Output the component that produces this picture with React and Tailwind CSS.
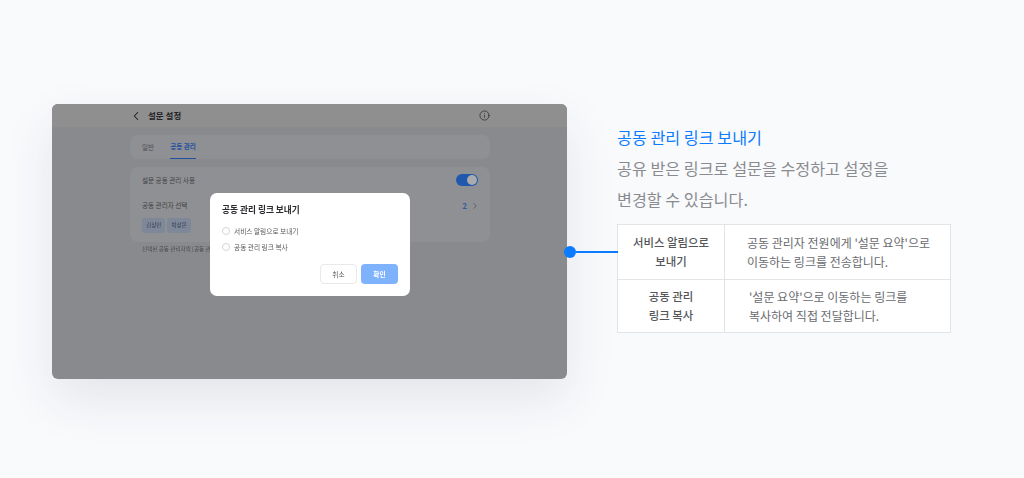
import { ChevronLeft, ChevronRight, Info } from "lucide-react";

const font = "font-['Noto_Sans_CJK_KR','Noto_Sans',sans-serif]";

function SurveyWindow() {
  return (
    <div className="relative w-[515px] h-[275px] shrink-0 rounded-[6px] overflow-hidden bg-[#898a8d] shadow-[0_20px_50px_rgba(40,50,80,0.1)]">
      <div className="blur-[0.3px]">
        {/* Header */}
        <div className="h-[23px] bg-[#8f8f90] flex items-center pl-[77px] pr-[77px]">
          <ChevronLeft size={14} strokeWidth={1.8} className="text-[#1d1d1f]" />
          <span className="ml-[5px] pb-[1px] text-[8.5px] font-bold text-[#222224]">설문 설정</span>
          <Info size={11} strokeWidth={1.4} className="ml-auto text-[#1d1d1f]" />
        </div>

        {/* Body */}
        <div className="w-[360px] ml-[78px] mt-[8px] flex flex-col">
          <div className="h-[24px] rounded-[8px] bg-[#8f9093] flex items-end pl-[12px] gap-[16px] text-[6.6px]">
            <span className="h-full pt-[1px] flex items-center text-[#4d4e52]">일반</span>
            <span className="h-full pt-[1px] flex items-center font-bold text-[#1f4f9e] border-b border-[#1f4f9e]">공동 관리</span>
          </div>

          <div className="h-[75px] mt-[8px] rounded-[8px] bg-[#8f9093] pl-[12px] pr-[10px] pt-[7px] text-[6.6px] text-[#3f4044]">
            <div className="flex items-center justify-between h-[12px]">
              <span className="pt-[2px]">설문 공동 관리 사용</span>
              <div className="w-[22px] h-[12px] mr-[2px] rounded-full bg-[#1f58ad] flex items-center justify-end pr-[1px]">
                <div className="w-[10px] h-[10px] rounded-full bg-[#a9abae]" />
              </div>
            </div>
            <div className="flex items-center justify-between mt-[14px] h-[12px]">
              <span>공동 관리자 선택</span>
              <div className="flex items-center gap-[3px] font-bold text-[#2f5da5] text-[8px]">
                2
                <ChevronRight size={10} strokeWidth={1.6} className="text-[#4b4c50]" />
              </div>
            </div>
            <div className="flex gap-[2px] mt-[6px] text-[5.6px] text-[#38435a]">
              <span className="h-[15px] px-[4px] flex items-center rounded-[3px] bg-[#7e8898]">김상민</span>
              <span className="h-[15px] px-[4px] flex items-center rounded-[3px] bg-[#7e8898]">박상은</span>
            </div>
          </div>

          <p className="mt-[3px] pl-[12px] text-[5.6px] text-[#4a4b4f]">선택된 공동 관리자의 [공동 관리] 권한</p>
        </div>

        {/* Dialog */}
        <div className="absolute left-[158px] top-[89px] w-[200px] h-[103px] rounded-[7px] bg-white px-[12px] pt-[10px]">
          <p className="text-[8.7px] font-bold text-[#2a2b2e] leading-[14px]">공동 관리 링크 보내기</p>
          <div className="mt-[8px] flex items-center gap-[4px] h-[12px] text-[6.7px] text-[#55565a]">
            <span className="w-[8px] h-[8px] rounded-full border border-[#d4d6d9]" />
            서비스 알림으로 보내기
          </div>
          <div className="mt-[4px] flex items-center gap-[4px] h-[12px] text-[6.7px] text-[#55565a]">
            <span className="w-[8px] h-[8px] rounded-full border border-[#d4d6d9]" />
            공동 관리 링크 복사
          </div>
          <div className="mt-[11px] flex justify-end gap-[4px] text-[6.7px]">
            <span className="w-[37px] h-[20px] rounded-[4px] border border-[#e8e9eb] flex items-center justify-center text-[#55565a]">취소</span>
            <span className="w-[37px] h-[20px] rounded-[4px] bg-[#7fb2fc] flex items-center justify-center font-bold text-white">확인</span>
          </div>
        </div>
      </div>
    </div>
  );
}

function FeatureTable() {
  return (
    <div className="relative w-[334px] border border-[#e2e4e8] bg-white text-[12px] leading-[19px] text-[#6a6b70] grid grid-cols-[107px_1fr]">
      {/* Connector */}
      <div className="absolute left-[-54px] top-[21px] w-[54px] flex items-center">
        <span className="w-[12px] h-[12px] rounded-full bg-[#0b7bff] shrink-0" />
        <span className="h-[2px] flex-1 bg-[#0b7bff]" />
      </div>
      <div className="h-[55px] border-r border-b border-[#e2e4e8] flex items-center justify-center text-center font-medium text-[11.4px] text-[#55565a]">
        <p>서비스 알림으로<br />보내기</p>
      </div>
      <div className="h-[55px] border-b border-[#e2e4e8] flex items-center pl-[22px]">
        <p>공동 관리자 전원에게 '설문 요약'으로<br />이동하는 링크를 전송합니다.</p>
      </div>
      <div className="h-[52px] border-r border-[#e2e4e8] flex items-center justify-center text-center font-medium text-[11.4px] text-[#55565a]">
        <p>공동 관리<br />링크 복사</p>
      </div>
      <div className="h-[52px] flex items-center pl-[24px]">
        <p>'설문 요약'으로 이동하는 링크를<br />복사하여 직접 전달합니다.</p>
      </div>
    </div>
  );
}

export default function App() {
  return (
    <div className={`w-[1024px] h-[478px] overflow-hidden bg-[#f9fafc] flex pl-[52px] pt-[104px] ${font}`}>
      <SurveyWindow />
      <div className="ml-[50px] flex flex-col">
        <div className="mt-[18px] text-[16.2px] leading-[31px] text-[#8a8b90]">
          <p className="text-[#0b7bff]">공동 관리 링크 보내기</p>
          <p>공유 받은 링크로 설문을 수정하고 설정을</p>
          <p>변경할 수 있습니다.</p>
        </div>
        <div className="mt-[9px]">
          <FeatureTable />
        </div>
      </div>
    </div>
  );
}
